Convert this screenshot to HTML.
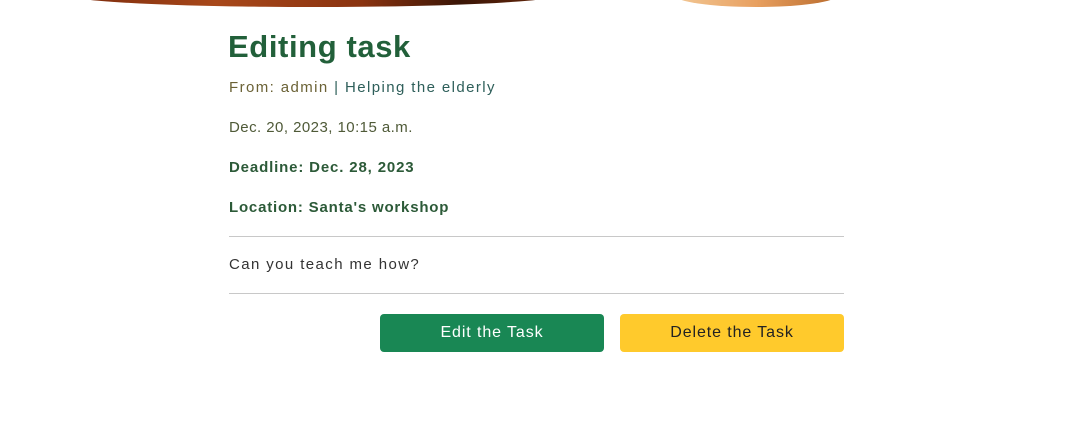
<!DOCTYPE html>
<html><head><style>
body{margin:0;width:1076px;height:443px;background:#fff;position:relative;overflow:hidden;font-family:"Liberation Sans",sans-serif}
.a{position:absolute}
p{margin:0;position:absolute;left:229px;font-size:15px;white-space:nowrap}
</style></head><body>
<div class="a" style="left:68px;top:-60px;width:490px;height:67px;border-radius:0 0 50% 50%/0 0 18% 18%;background:linear-gradient(90deg,#7a2a0c,#a8481a 30%,#8a3310 60%,#3a1506 80%,#6b2a0c);"></div>
<div class="a" style="left:674px;top:-60px;width:164px;height:67px;border-radius:0 0 50% 50%/0 0 18% 18%;background:linear-gradient(90deg,#f2c896,#e8a060 50%,#b86a2c);"></div>
<div class="a" style="left:228px;top:29px;font-size:31px;font-weight:bold;color:#22603a;letter-spacing:0.6px">Editing task</div>
<p style="top:79px;color:#6b6236;letter-spacing:1.4px">From: admin <span style="color:#2e5f5a">| Helping the elderly</span></p>
<p style="top:119px;color:#4f5a38;letter-spacing:0.45px">Dec. 20, 2023, 10:15 a.m.</p>
<p style="top:159px;color:#2c5a38;font-weight:bold;letter-spacing:0.85px">Deadline: Dec. 28, 2023</p>
<p style="top:199px;color:#2c5a38;font-weight:bold;letter-spacing:0.8px">Location: Santa's workshop</p>
<div class="a" style="left:229px;top:236px;width:615px;height:1px;background:#c8c8c8"></div>
<p style="top:256px;color:#333;letter-spacing:1.4px">Can you teach me how?</p>
<div class="a" style="left:229px;top:293px;width:615px;height:1px;background:#c8c8c8"></div>
<div class="a" style="left:380px;top:314px;width:224px;height:38px;border-radius:4px;background:#198754;color:#fff;font-size:16px;line-height:38px;text-align:center;letter-spacing:0.9px">Edit the Task</div>
<div class="a" style="left:620px;top:314px;width:224px;height:38px;border-radius:4px;background:#ffca2c;color:#222;font-size:16px;line-height:38px;text-align:center;letter-spacing:0.9px">Delete the Task</div>
</body></html>
